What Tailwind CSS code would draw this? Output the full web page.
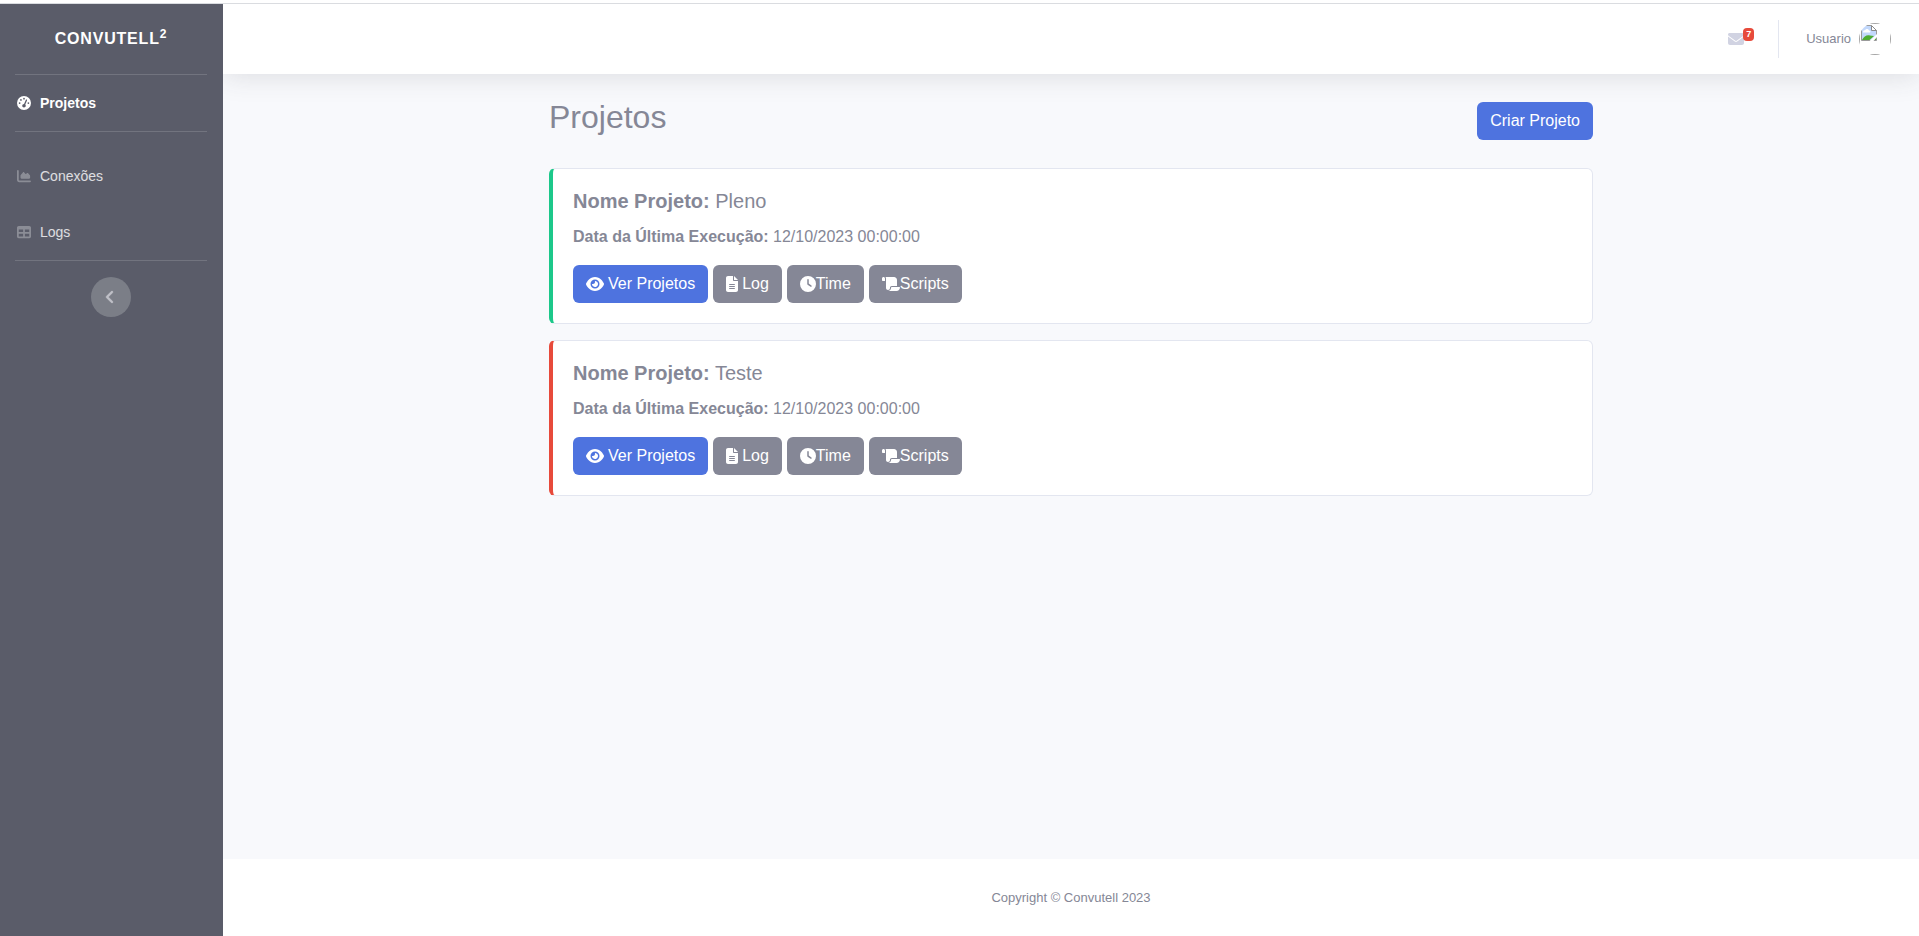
<!DOCTYPE html>
<html lang="pt-BR">
<head>
<meta charset="utf-8">
<title>Convutell - Projetos</title>
<script src="https://cdn.jsdelivr.net/npm/@tailwindcss/browser@4"></script>
</head>
<body class="min-h-screen flex flex-col bg-white text-base text-[#858796] font-['Liberation_Sans',Arial,sans-serif]">
<svg class="hidden" aria-hidden="true">
  <symbol id="eye" viewBox="0 0 576 512"><path d="M288 32c-80.8 0-145.5 36.8-192.6 80.6C48.6 156 17.3 208 2.5 243.7c-3.3 7.9-3.3 16.7 0 24.6C17.3 304 48.6 356 95.4 399.4C142.5 443.2 207.2 480 288 480s145.5-36.8 192.6-80.6c46.8-43.5 78.1-95.4 93-131.1c3.3-7.9 3.3-16.7 0-24.6c-14.9-35.7-46.2-87.7-93-131.1C433.5 68.8 368.8 32 288 32zM144 256a144 144 0 1 1 288 0 144 144 0 1 1 -288 0zm144-64c0 35.3-28.7 64-64 64c-7.1 0-13.9-1.2-20.3-3.3c-5.5-1.8-11.9 1.6-11.7 7.4c.3 6.9 1.3 13.8 3.2 20.7c13.7 51.2 66.4 81.6 117.6 67.9s81.6-66.4 67.9-117.6c-11.1-41.5-47.8-69.4-88.6-71.1c-5.8-.2-9.2 6.1-7.4 11.7c2.1 6.4 3.3 13.2 3.3 20.3z"/></symbol>
  <symbol id="file" viewBox="0 0 384 512"><path d="M64 0C28.7 0 0 28.7 0 64V448c0 35.3 28.7 64 64 64H320c35.3 0 64-28.7 64-64V160H256c-17.7 0-32-14.3-32-32V0H64zM256 0V128H384L256 0zM112 256H272c8.800 0 16 7.200 16 16s-7.200 16-16 16H112c-8.800 0-16-7.200-16-16s7.200-16 16-16zm0 64H272c8.800 0 16 7.200 16 16s-7.200 16-16 16H112c-8.800 0-16-7.200-16-16s7.200-16 16-16zm0 64H272c8.800 0 16 7.200 16 16s-7.200 16-16 16H112c-8.800 0-16-7.200-16-16s7.200-16 16-16z"/></symbol>
  <symbol id="clock" viewBox="0 0 512 512"><path d="M256 0a256 256 0 1 1 0 512A256 256 0 1 1 256 0zM232 120V256c0 8 4 15.500 10.700 20l96 64c11 7.400 25.900 4.400 33.300-6.700s4.400-25.900-6.700-33.300L280 243.200V120c0-13.300-10.700-24-24-24s-24 10.700-24 24z"/></symbol>
  <symbol id="scroll" viewBox="0 0 576 512"><path d="M0 80v48c0 17.700 14.300 32 32 32H48 96V80c0-26.500-21.500-48-48-48S0 53.500 0 80zM112 32c10 13.400 16 30 16 48V384c0 35.300 28.700 64 64 64s64-28.700 64-64v-5.300c0-32.400 26.300-58.700 58.700-58.700H480V128c0-53-43-96-96-96H112zM464 480c61.900 0 112-50.100 112-112c0-8.800-7.200-16-16-16H314.700c-14.700 0-26.700 11.900-26.700 26.700V384c0 53-43 96-96 96H368h96z"/></symbol>
</svg>

<div class="h-1 shrink-0 border-b border-[#dadce0]"></div>

<div class="flex grow">
  <nav class="w-[223px] shrink-0 bg-[#5a5c69] pr-px text-sm" aria-label="Principal">
    <a href="#" class="flex h-[70px] items-center justify-center text-base font-bold tracking-wider text-white"><span>CONVUTELL<sup class="text-xs">2</sup></span></a>
    <hr class="ml-[15px] mr-[15px] border-white/15">
    <a href="#" class="flex h-14 items-center gap-[9px] pl-[17px] font-bold text-white">
      <svg class="size-[14px] fill-current" viewBox="0 0 512 512"><path d="M0 256a256 256 0 1 1 512 0A256 256 0 1 1 0 256zM288 96a32 32 0 1 0 -64 0 32 32 0 1 0 64 0zM256 416c35.300 0 64-28.700 64-64c0-17.400-6.900-33.100-18.100-44.600L366 161.700c5.300-12.100-.2-26.300-12.300-31.600s-26.300 .2-31.600 12.300L257.900 288c-.6 0-1.300 0-1.900 0c-35.300 0-64 28.700-64 64s28.700 64 64 64zM176 144a32 32 0 1 0 -64 0 32 32 0 1 0 64 0zM96 288a32 32 0 1 0 0-64 32 32 0 1 0 0 64zm352-32a32 32 0 1 0 -64 0 32 32 0 1 0 64 0z"/></svg>
      Projetos
    </a>
    <hr class="ml-[15px] mr-[15px] mb-4 border-white/15">
    <a href="#" class="flex h-14 items-center gap-[9px] pl-[17px] text-white/80">
      <svg class="size-[14px] fill-white/30" viewBox="0 0 512 512"><path d="M64 64c0-17.700-14.300-32-32-32S0 46.300 0 64V400c0 44.200 35.800 80 80 80H480c17.700 0 32-14.300 32-32s-14.300-32-32-32H80c-8.800 0-16-7.200-16-16V64zm96 288H448c17.700 0 32-14.300 32-32V251.800c0-7.600-2.700-15-7.700-20.800l-65.800-76.800c-12.100-14.200-33.700-15-46.900-1.800l-21 21c-10 10-26.400 9.200-35.400-1.600l-39.200-47c-12.600-15.100-35.700-15.400-48.700-.6L135.900 215c-5.100 5.800-7.900 13.300-7.900 21.100v84c0 17.700 14.300 32 32 32z"/></svg>
      Conexões
    </a>
    <a href="#" class="flex h-14 items-center gap-[9px] pl-[17px] text-white/80">
      <svg class="size-[14px] fill-white/30" viewBox="0 0 512 512"><path d="M64 256V160H224v96H64zm0 64H224v96H64V320zm224 96V320H448v96H288zM448 256H288V160H448v96zM64 32C28.700 32 0 60.700 0 96V416c0 35.300 28.700 64 64 64H448c35.300 0 64-28.700 64-64V96c0-35.300-28.700-64-64-64H64z"/></svg>
      Logs
    </a>
    <hr class="ml-[15px] mr-[15px] mb-4 border-white/15">
    <button type="button" aria-label="Recolher menu" class="mx-auto flex size-10 items-center justify-center rounded-full bg-[#7b7e87] pr-0.5">
      <svg class="h-4 w-[10px] fill-[#c0c1c8] stroke-[#c0c1c8] stroke-12" viewBox="0 0 320 512"><path d="M41.400 233.400c-12.500 12.500-12.500 32.800 0 45.300l160 160c12.500 12.500 32.800 12.500 45.300 0s12.500-32.800 0-45.300L109.300 256 246.600 118.600c12.500-12.500 12.500-32.800 0-45.300s-32.800-12.500-45.300 0l-160 160z"/></svg>
    </button>
  </nav>

  <div class="flex min-w-0 grow flex-col overflow-hidden bg-[#f8f9fc]">
    <header class="flex h-[70px] shrink-0 items-center justify-end bg-white pr-7 shadow-[0_2px_28px_rgba(58,59,69,0.15)]">
      <a href="#" aria-label="Mensagens" class="relative mr-[34px]">
        <svg class="size-4 fill-[#d1d3e2]" viewBox="0 0 512 512"><path d="M48 64C21.500 64 0 85.500 0 112c0 15.100 7.100 29.300 19.200 38.400L236.800 313.600c11.400 8.500 27 8.500 38.400 0L492.800 150.400c12.100-9.100 19.200-23.300 19.200-38.400c0-26.500-21.500-48-48-48H48zM0 176V384c0 35.300 28.700 64 64 64H448c35.300 0 64-28.700 64-64V176L294.400 339.200c-22.800 17.100-54 17.100-76.800 0L0 176z"/></svg>
        <span class="absolute left-[15px] -top-[3px] flex h-[13px] w-[11px] items-center justify-center rounded bg-[#e74a3b] text-[9px] font-bold leading-none text-white">7</span>
      </a>
      <div class="mr-[27px] h-[38px] border-l border-[#e3e6f0]"></div>
      <a href="#" class="flex items-center gap-2 text-[13px]">
        Usuario
        <span class="size-8 overflow-hidden rounded-full">
          <svg class="size-8" viewBox="0 0 32 32" role="img" aria-label="Foto do usuário">
            <rect x=".5" y=".5" width="31" height="31" fill="none" stroke="#a5a5a5"/>
            <path d="M2.500 2.500H12.500L17.500 7.500V17.500H2.500z" fill="#c3d9fc" stroke="#9a9a9a"/>
            <path d="M4 9.500c0-2 1-2.500 2-2 .5-2 3.500-2 4 0 1.500 0 2 1 1 2z" fill="#fff"/>
            <path d="M3 17c2-4 5-5.500 8-4.500l4 .5-4.500 4z" fill="#4fae33"/>
            <path d="M14.500 17l2.500-2.500V17z" fill="#4fae33"/>
            <path d="M12.500 2.500V7.500H17.500z" fill="#fff" stroke="#8a8a8a"/>
            <path d="M10 18.500l8.500-8v3L14 18.500z" fill="#fff"/>
          </svg>
        </span>
      </a>
    </header>

    <main class="mx-auto w-full max-w-[1092px] grow px-6 pt-6">
      <div class="mb-6 flex items-center justify-between">
        <h1 class="mb-2 text-[32px] leading-[38px]">Projetos</h1>
        <button type="button" class="h-[38px] rounded-md bg-[#4e73df] px-[13px] text-white">Criar Projeto</button>
      </div>

      <article class="mb-4 rounded-md border border-l-4 border-[#e3e6f0] border-l-[#1cc88a] bg-white p-5">
        <h2 class="mb-3 text-xl leading-6"><strong>Nome Projeto:</strong> Pleno</h2>
        <p class="mb-4"><strong>Data da Última Execução:</strong> 12/10/2023 00:00:00</p>
        <div class="flex gap-[5px] text-white">
          <button type="button" class="flex h-[38px] items-center gap-1 rounded-md bg-[#4e73df] px-[13px]"><svg class="h-4 w-[18px] fill-current"><use href="#eye"/></svg>Ver Projetos</button>
          <button type="button" class="flex h-[38px] items-center gap-1 rounded-md bg-[#858796] px-[13px]"><svg class="h-4 w-3 fill-current"><use href="#file"/></svg>Log</button>
          <button type="button" class="flex h-[38px] items-center rounded-md bg-[#858796] px-[13px]"><svg class="size-4 fill-current"><use href="#clock"/></svg>Time</button>
          <button type="button" class="flex h-[38px] items-center rounded-md bg-[#858796] px-[13px]"><svg class="h-4 w-[18px] fill-current"><use href="#scroll"/></svg>Scripts</button>
        </div>
      </article>

      <article class="mb-4 rounded-md border border-l-4 border-[#e3e6f0] border-l-[#e74a3b] bg-white p-5">
        <h2 class="mb-3 text-xl leading-6"><strong>Nome Projeto:</strong> Teste</h2>
        <p class="mb-4"><strong>Data da Última Execução:</strong> 12/10/2023 00:00:00</p>
        <div class="flex gap-[5px] text-white">
          <button type="button" class="flex h-[38px] items-center gap-1 rounded-md bg-[#4e73df] px-[13px]"><svg class="h-4 w-[18px] fill-current"><use href="#eye"/></svg>Ver Projetos</button>
          <button type="button" class="flex h-[38px] items-center gap-1 rounded-md bg-[#858796] px-[13px]"><svg class="h-4 w-3 fill-current"><use href="#file"/></svg>Log</button>
          <button type="button" class="flex h-[38px] items-center rounded-md bg-[#858796] px-[13px]"><svg class="size-4 fill-current"><use href="#clock"/></svg>Time</button>
          <button type="button" class="flex h-[38px] items-center rounded-md bg-[#858796] px-[13px]"><svg class="h-4 w-[18px] fill-current"><use href="#scroll"/></svg>Scripts</button>
        </div>
      </article>
    </main>

    <footer class="bg-white py-8 text-center text-[13px] leading-[13px]">Copyright © Convutell 2023</footer>
  </div>
</div>
</body>
</html>
